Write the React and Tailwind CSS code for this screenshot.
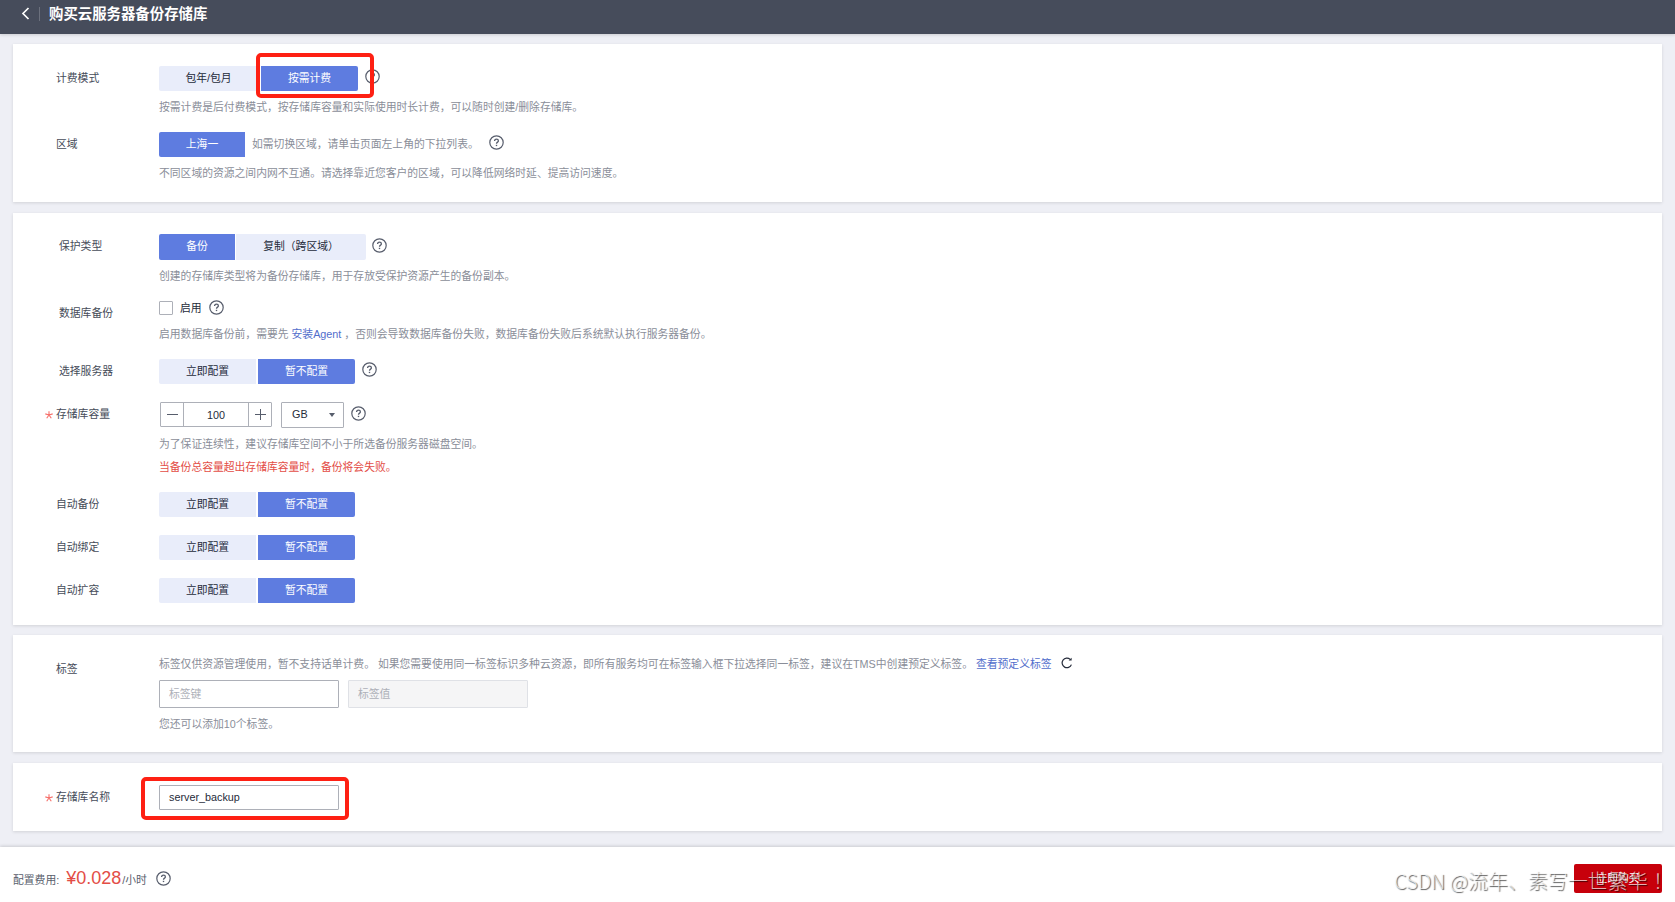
import React from 'react';

function Help({ className = '' }) {
  return (
    <svg className={`h-[15px] w-[15px] shrink-0 ${className}`} viewBox="0 0 15 15" fill="none" stroke="#575d6c">
      <circle cx="7.5" cy="7.5" r="6.7" strokeWidth="1.2" />
      <path d="M5.6 6.1C5.6 4.9 6.4 4.2 7.5 4.2S9.4 4.9 9.4 5.9C9.4 7.1 7.5 7.2 7.5 8.8" strokeWidth="1.3" />
      <path d="M7.5 9.8V11.1" strokeWidth="1.4" />
    </svg>
  );
}

function Row({ label, required, indent = 'pl-[43px]', labelClass = '', className, children }) {
  return (
    <div className={`flex items-center ${className}`}>
      <div className={`relative w-[146px] shrink-0 pb-[2px] text-[#464c59] ${indent} ${labelClass}`}>
        {required && (
          <svg className="absolute left-[32px] top-[5px] h-[8px] w-[8px]" viewBox="0 0 8 8" stroke="#f66f6a" strokeWidth="1.1">
            <path d="M4 4V0.2M4 4 7.7 2.9M4 4 6.3 7.3M4 4 1.7 7.3M4 4 0.3 2.9" />
          </svg>
        )}
        {label}
      </div>
      {children}
    </div>
  );
}

function Hint({ className = '', children }) {
  return <p className={`ml-[146px] flex h-4 items-center whitespace-pre text-[#8a8e99] ${className}`}>{children}</p>;
}

function Option({ active, className, children }) {
  return (
    <button
      className={`flex h-full shrink-0 items-center justify-center pb-[2px] ${active ? 'bg-[#5e7ce0] text-white' : 'bg-[#e9edfa] text-[#252b3a]'} ${className}`}
    >
      {children}
    </button>
  );
}

function ConfigChoice() {
  return (
    <div className="flex h-[25px] gap-[2px]">
      <Option className="w-[97px] rounded-l-xs">立即配置</Option>
      <Option active className="w-[97px] rounded-r-xs">暂不配置</Option>
    </div>
  );
}

function Card({ className, children }) {
  return <section className={`mx-[13px] shrink-0 bg-white shadow-[0_1px_3px_rgba(0,0,0,0.12)] ${className}`}>{children}</section>;
}

export default function App() {
  return (
    <div className="flex h-[902px] w-[1675px] flex-col overflow-hidden bg-[#eeeff5] font-['Liberation_Sans','Noto_Sans_CJK_SC',sans-serif] text-[10.8px] leading-4">
      <header className="flex h-[34px] shrink-0 items-start bg-[#464c5b] text-white shadow-[0_1px_3px_rgba(0,0,0,0.15)]">
        <svg className="ml-[20px] mt-[7px] h-[13px] w-[11px]" viewBox="0 0 11 13" fill="none" stroke="#fff" strokeWidth="1.7">
          <path d="M8.5 1 3 6.5 8.5 12" />
        </svg>
        <div className="ml-[8px] mt-[7px] h-[14px] w-px bg-[#6b707d]" />
        <h1 className="ml-[9px] mt-[4px] text-[14.4px] leading-5 font-bold">购买云服务器备份存储库</h1>
      </header>

      <Card className="mt-[10px] h-[158px] pt-[22px]">
        <Row label="计费模式" className="h-[25px]">
          <Option className="w-[99px] rounded-l-xs">包年/包月</Option>
          <div className="relative ml-[3px] h-full">
            <Option active className="w-[97px] rounded-r-xs">按需计费</Option>
            <div className="absolute -left-[5px] -top-[13px] z-10 h-[45px] w-[118px] rounded-[5px] border-4 border-[#fe2013]" />
          </div>
          <Help className="ml-[7px] -mt-[4px]" />
        </Row>
        <Hint className="mt-2">按需计费是后付费模式，按存储库容量和实际使用时长计费，可以随时创建/删除存储库。</Hint>
        <Row label="区域" className="mt-[17px] h-[25px]">
          <Option active className="w-[86px] rounded-l-xs">上海一</Option>
          <span className="ml-[7px] pb-[2px] text-[#8a8e99]">如需切换区域，请单击页面左上角的下拉列表。</span>
          <Help className="ml-[10px] -mt-[4px]" />
        </Row>
        <Hint className="mt-2">不同区域的资源之间内网不互通。请选择靠近您客户的区域，可以降低网络时延、提高访问速度。</Hint>
      </Card>

      <Card className="mt-[11px] h-[412px] pt-[21px]">
        <Row label="保护类型" indent="pl-[46px]" className="h-[26px]">
          <Option active className="w-[76px] rounded-l-xs">备份</Option>
          <Option className="ml-px w-[130px] rounded-r-xs">复制（跨区域）</Option>
          <Help className="ml-[6px] -mt-[3px]" />
        </Row>
        <Hint className="mt-2">创建的存储库类型将为备份存储库，用于存放受保护资源产生的备份副本。</Hint>
        <Row label="数据库备份" indent="pl-[46px]" labelClass="mt-[12px]" className="mt-[16px] h-4">
          <span className="h-[14px] w-[14px] rounded-[1px] border border-[#adb0b8] bg-white" />
          <span className="ml-[7px] text-[#252b3a]">启用</span>
          <Help className="ml-[7px] -mt-px" />
        </Row>
        <Hint className="mt-[10px]">
          启用数据库备份前，需要先 <a className="text-[#526ecc]">安装Agent</a> ，否则会导致数据库备份失败，数据库备份失败后系统默认执行服务器备份。
        </Hint>
        <Row label="选择服务器" indent="pl-[46px]" className="mt-[17px] h-[25px]">
          <ConfigChoice />
          <Help className="ml-[7px] -mt-[4px]" />
        </Row>
        <Row label="存储库容量" required className="mt-[18px] h-[26px]">
          <div className="ml-px -mt-px flex h-[25px] w-[112px] items-stretch rounded-[1px] border border-[#adb0b8] text-[#252b3a]">
            <button className="flex w-[22px] items-center justify-center">
              <svg className="h-[11px] w-[11px]" viewBox="0 0 11 11" stroke="#575d6c"><path d="M0 5.5H11" /></svg>
            </button>
            <span className="flex flex-1 items-center justify-center border-x border-[#adb0b8]">100</span>
            <button className="flex w-[22px] items-center justify-center">
              <svg className="h-[11px] w-[11px]" viewBox="0 0 11 11" stroke="#575d6c"><path d="M0 5.5H11M5.5 0V11" /></svg>
            </button>
          </div>
          <div className="ml-[9px] flex h-[26px] w-[63px] items-center justify-between rounded-[1px] border border-[#adb0b8] pb-[2px] pl-[10px] pr-[8px] text-[#252b3a]">
            GB
            <svg className="mt-[2px] h-[4px] w-[6px]" viewBox="0 0 6 4"><path d="M0 0H6L3 4Z" fill="#575d6c" /></svg>
          </div>
          <Help className="ml-[7px] -mt-[4px]" />
        </Row>
        <Hint className="mt-2">为了保证连续性，建议存储库空间不小于所选备份服务器磁盘空间。</Hint>
        <p className="ml-[146px] mt-[7px] h-4 text-[#e34d46]">当备份总容量超出存储库容量时，备份将会失败。</p>
        <Row label="自动备份" className="mt-[17px] h-[25px]"><ConfigChoice /></Row>
        <Row label="自动绑定" className="mt-[18px] h-[25px]"><ConfigChoice /></Row>
        <Row label="自动扩容" className="mt-[18px] h-[25px]"><ConfigChoice /></Row>
      </Card>

      <Card className="mt-[10px] h-[117px] pt-[21px]">
        <Row label="标签" labelClass="mt-[11px]" className="h-4">
          <span className="whitespace-pre text-[#8a8e99]">
            标签仅供资源管理使用，暂不支持话单计费。 如果您需要使用同一标签标识多种云资源，即所有服务均可在标签输入框下拉选择同一标签，建议在TMS中创建预定义标签。{' '}
            <a className="text-[#526ecc]">查看预定义标签</a>
          </span>
          <svg className="ml-[9px] -mt-[2px] h-[12px] w-[12px]" viewBox="0 0 12 12" fill="none" stroke="#252b3a" strokeWidth="1.2">
            <path d="M10.4 7.6A4.8 4.8 0 1 1 9.2 2.4" />
            <path d="M10.6 0.8V3.6H7.6Z" fill="#252b3a" stroke="none" />
          </svg>
        </Row>
        <div className="ml-[146px] mt-2 flex gap-[9px]">
          <div className="flex h-[28px] w-[180px] items-center rounded-[1px] border border-[#adb0b8] pl-[9px] text-[#adb0b8]">标签键</div>
          <div className="flex h-[28px] w-[180px] items-center rounded-[1px] border border-[#dfe1e6] bg-[#f5f5f6] pl-[9px] text-[#adb0b8]">标签值</div>
        </div>
        <Hint className="mt-2">您还可以添加10个标签。</Hint>
      </Card>

      <Card className="mt-[11px] h-[68px] pt-[22px]">
        <Row label="存储库名称" required className="h-[25px]">
          <div className="relative">
            <div className="flex h-[25px] w-[180px] items-center rounded-[1px] border border-[#adb0b8] pb-px pl-[9px] text-[#252b3a]">server_backup</div>
            <div className="absolute -left-[18px] -top-[8px] h-[43px] w-[208px] rounded-[5px] border-4 border-[#fe2013]" />
          </div>
        </Row>
      </Card>

      <footer className="relative mt-4 flex h-[55px] shrink-0 items-start bg-white px-[13px] text-[#575d6c] shadow-[0_-1px_3px_rgba(0,0,0,0.15)]">
        <span className="mt-[25px]">配置费用:</span>
        <span className="ml-[7px] mt-[21px] text-[18px] leading-5 text-[#e34d46]">¥0.028</span>
        <span className="ml-px mt-[25px]">/小时</span>
        <Help className="ml-[9px] mt-[24px]" />
        <button className="ml-auto mt-[17px] h-[29px] w-[88px] rounded-xs bg-[#c7000b] pb-px text-white">立即购买</button>
        <div className="absolute left-[1394px] top-[21px] whitespace-nowrap font-['Noto_Sans_CJK_SC',sans-serif] text-[20px] leading-[26px] font-light text-white/70 [text-shadow:1px_1px_1px_rgba(0,0,0,0.65)]">
          CSDN @流年、素写一世繁华<span className="font-['Noto_Sans_CJK_TC',sans-serif]">！</span>
        </div>
      </footer>
    </div>
  );
}
